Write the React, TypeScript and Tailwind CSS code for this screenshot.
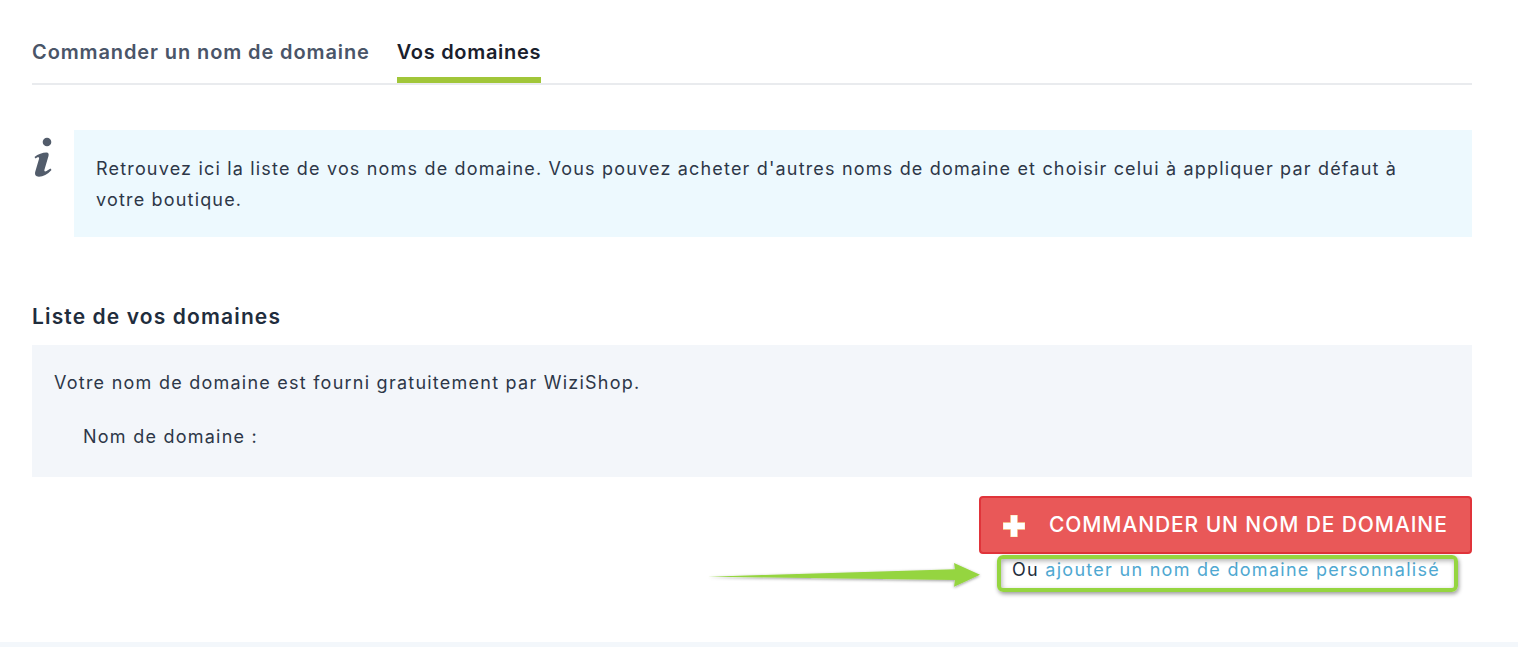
export default function App() {
  return (
    <div className="relative flex h-[647px] w-[1518px] flex-col overflow-hidden bg-white font-['Inter',sans-serif] text-[#2d3748]">
      <main className="h-[642px] pl-[32px] pr-[46px] pt-[36px]">
        <nav className="flex h-[49px] gap-[27px] border-b-2 border-[#e9ebee]">
          <div className="h-[47px] pt-[1px] text-[20px] leading-[30px] font-semibold tracking-[0.89px] text-[#4a5568]">Commander un nom de domaine</div>
          <div className="h-[47px] border-b-[6px] border-[#a1c639] pt-[1px] text-[20px] leading-[30px] font-semibold tracking-[0.7px] text-[#1a202c]">Vos domaines</div>
        </nav>
        <section className="mt-[45px] flex">
          <div className="w-[42px] pt-[6px]">
            <svg width="24" height="42" viewBox="0 0 24 42" className="text-[#525c6b]" fill="currentColor">
              <circle cx="15" cy="6" r="4.3" />
              <path d="M2.5 21 C6 18 10.5 16.5 14.5 16.5 C16.5 16.5 17 18 16.5 20 L12.5 33.5 C12 35.5 13 36 14.5 35 L18.5 32.5 L19.5 34 C15.5 38.5 11 40.7 7 40.7 C3.5 40.7 2.5 38.5 3.3 35.5 L7 23 C7.6 21 6 20.5 3.5 22.5 Z" />
            </svg>
          </div>
          <div className="flex h-[107px] flex-1 items-center bg-[#edf9fe] pl-[22px] pr-[22px] text-[18px] leading-[31px] tracking-[1.18px] text-[#2d3748]">
            <p>Retrouvez ici la liste de vos noms de domaine. Vous pouvez acheter d'autres noms de domaine et choisir celui à appliquer par défaut à votre boutique.</p>
          </div>
        </section>
        <h2 className="mt-[64px] text-[21px] leading-[32px] font-semibold tracking-[1.13px] text-[#1f2d3d]">Liste de vos domaines</h2>
        <section className="mt-[12px] h-[132px] bg-[#f3f6fa] pl-[22px] pt-[23px] text-[18px] leading-[30px] tracking-[1.24px] text-[#2d3748]">
          <p>Votre nom de domaine est fourni gratuitement par WiziShop.</p>
          <p className="mt-[24px] pl-[29px]">Nom de domaine :</p>
        </section>
        <div className="mt-[19px] flex flex-col items-end">
          <button className="flex h-[58px] w-[493px] items-center rounded-[4px] border-2 border-[#e0343a] bg-[#e95858] pl-[22px] text-[21px] font-medium tracking-[0.9px] text-white">
            <svg width="22" height="22" viewBox="0 0 22 22" className="mt-[1px] shrink-0">
              <path d="M7.5 0h7v7.5H22v7h-7.5V22h-7v-7.5H0v-7h7.5z" fill="#fff" stroke="#f7c96b" strokeWidth="0.5" />
            </svg>
            <span className="ml-[24px]">COMMANDER UN NOM DE DOMAINE</span>
          </button>
          <p className="mr-[32px] mt-[2px] text-[18px] leading-[28px] tracking-[1.28px] text-[#1f2d3d]">
            Ou <a className="text-[#4fa8d1]">ajouter un nom de domaine personnalisé</a>
          </p>
        </div>
      </main>
      <div className="h-[5px] bg-[#f3f7fb]" />
      <div className="absolute left-[997px] top-[555px] h-[37px] w-[461px] rounded-[6px] border-[4px] border-[#95d540] shadow-[1px_2px_4px_rgba(0,0,0,0.4),inset_1px_2px_5px_rgba(0,0,0,0.3)]" />
      <svg className="absolute left-[700px] top-[555px]" width="290" height="40" viewBox="0 0 290 40">
        <defs>
          <filter id="s" x="-5%" y="-50%" width="110%" height="200%">
            <feDropShadow dx="0" dy="1" stdDeviation="1.5" floodColor="#000" floodOpacity="0.4" />
          </filter>
        </defs>
        <path d="M8 21.7 L255 14.3 L254 8 L280 19.7 L254 31.7 L255 25 Z" fill="#95d540" filter="url(#s)" />
      </svg>
    </div>
  );
}
